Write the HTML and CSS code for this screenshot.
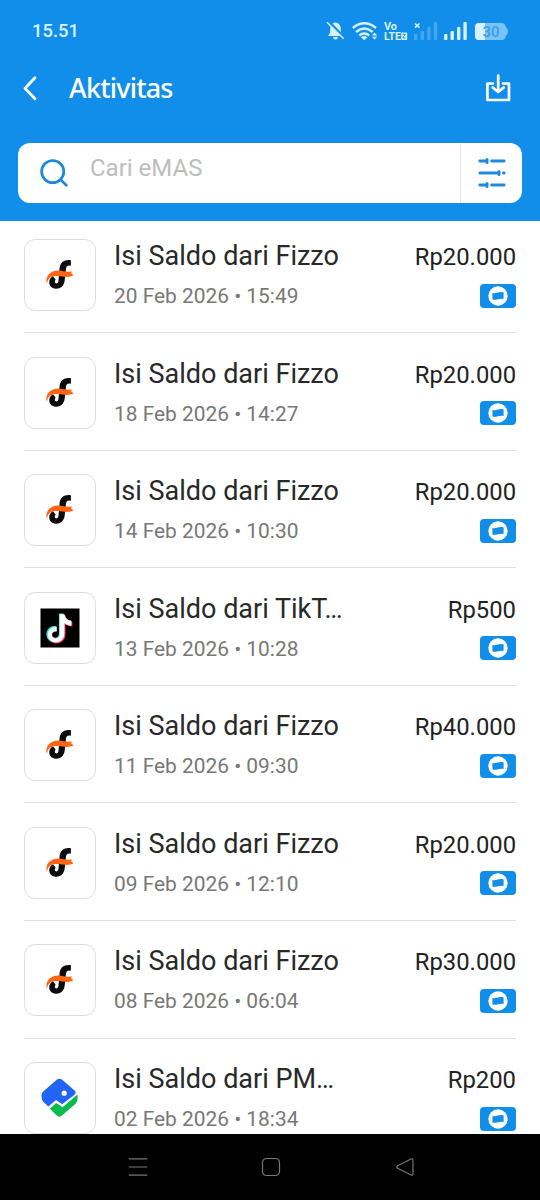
FILE: index.html
```html
<!DOCTYPE html>
<html lang="id">
<head>
<meta charset="utf-8">
<title>Aktivitas</title>
<link rel="stylesheet" href="styles.css">
</head>
<body>
<svg class="defs" aria-hidden="true">
  <symbol id="fizzo" viewBox="0 0 40 40">
    <path d="M30.9 5.2V10.7C28 10 26.4 10.8 26 13.4L24.7 25.5C24 31.2 20.2 34 15.6 33.7C11.8 33.4 9.2 30.8 9.2 27.2C9.2 24.6 10.8 22.2 13 21.2L15.6 24.6C14.2 26.6 14.6 28.4 16.4 28.4C17.9 28.4 18.3 27.4 18.5 25.6L19.6 13C20.2 7 24.8 4 30.9 5.2Z" fill="#0b0b0b"/>
    <path d="M7 29.3C4.6 20.8 10.5 15.6 18.3 15.5C23.5 15.5 27 17.9 31.8 16.2L31.2 18.2L33.4 20.6C28 23 23 21.6 18.2 21C12 20.3 7.4 22.6 7 29.3Z" fill="#ff6512"/>
  </symbol>
  <symbol id="tiktok" viewBox="0 0 40 40">
    <path d="M.5 .5H39.5V39.5H.5Z" fill="#000"/>
    <path d="M19 5.5H23.4C23.8 9.5 26.6 12 30.6 12.5V17.2C28 17.2 25.5 16.3 23.5 14.8V25.3C23.5 31 19.5 34.5 14.8 34.5C10 34.5 6.4 30.8 6.4 26.2C6.4 20.8 11 17.2 16.2 18V23C13.3 22.2 11.2 23.9 11.2 26.2C11.2 28.2 12.8 29.8 14.9 29.8C17.5 29.8 19 28 19 25.2Z" fill="#29e8df"/>
    <path d="M21.2 7.3H25.5C25.9 11.1 28.5 13.3 32.4 13.8V18.5C29.8 18.5 27.5 17.6 25.5 16.1V26.6C25.5 32 21.5 35.5 16.8 35.5C13.4 35.5 10.5 33.5 9.5 31L13 29L17 31.1C19.5 31.1 21.2 29.3 21.2 26.5Z" fill="#f32b55"/>
    <path d="M20 6.5H24.2C25 10.3 27.3 12.5 31.2 13.1V17.4C28.4 17.4 26.2 16.6 24.2 15.1V25.8C24.2 31 20.4 34.3 15.9 34.3C11.5 34.3 8 31 8 26.8C8 22.2 11.9 18.8 16.5 19V23.2C13.8 22.8 11.8 24.5 11.8 26.8C11.8 28.9 13.5 30.6 15.7 30.6C18.4 30.6 20 28.7 20 26Z" fill="#fff" stroke="#fff" stroke-width=".5"/>
  </symbol>
  <symbol id="pm" viewBox="0 0 40 40">
    <path d="M17 1.5Q19.4 -.2 21.9 1.5L34.6 12.4Q36.6 14.4 34.8 16.4L22.2 26.2L16 22L8.4 28.6L3.4 24Q1.4 22 1.5 17.5Q1.6 15 3.2 13.4Z" fill="#2264f5"/>
    <path d="M9.8 30.8L16.2 25L22.6 29.2L37.4 16.4C38 21.5 37.4 23.8 35 26.2L21.7 37.8Q19.2 39.8 16.7 37.6Z" fill="#0abb50"/>
    <circle cx="24.2" cy="15.2" r="2.6" fill="#fff"/>
  </symbol>
  <symbol id="wallet" viewBox="0 0 20 20">
    <circle cx="10" cy="10" r="9.7" fill="#fff"/>
    <path d="M4.4 7C8.2 8.2 11.6 4.9 15.6 6.6V13C11.6 11.6 8.2 14.8 4.4 13.4Z" fill="#118eea"/>
  </symbol>
</svg>
<div class="screen">
  <header class="header">
    <div class="status">
      <span class="clock">15.51</span>
      <svg class="status-icons" viewBox="324 18 188 26" fill="#d6f2ff">
        <path d="M335.3 22.5C331.8 22.5 330.3 25.5 330.3 29C330.3 32.5 329.8 34.2 327.6 36H343.4C341.2 34.2 340.8 32.5 340.8 29C340.8 25.5 338.8 22.5 335.3 22.5ZM333 37H338Q337.8 39.6 335.5 39.6Q333.2 39.6 333 37Z"/>
        <path d="M328 21L344.7 38.3" stroke="#118eea" stroke-width="3"/>
        <path d="M327 22.3L343.7 38.7" stroke="#d6f2ff" stroke-width="1.5"/>
        <g fill="none" stroke="#d6f2ff" stroke-width="2.4"><path d="M352.8 28Q364.3 18.6 376 28M356 32Q364.3 25.2 372.7 32M359.3 35.5Q364.3 31.7 369.3 35.5"/></g>
        <path d="M361 37.2Q364.2 34.8 367.4 37.2L364.2 40.2ZM374.6 32.5L377.2 35.5H372ZM374.6 39.8L377.2 36.8H372Z"/>
        <text class="volte"><tspan x="384" y="29.6" textLength="13" lengthAdjust="spacingAndGlyphs">Vo</tspan><tspan x="384" y="39.8" textLength="17" lengthAdjust="spacingAndGlyphs">LTE</tspan></text>
        <rect x="401.2" y="32.6" width="6" height="7.3" rx="1"/>
        <path d="M402.6 34.3H405.4L402.8 38H405.6" fill="none" stroke="#118eea" stroke-width=".9"/>
        <path d="M415 23.5L419.4 27.7M419.4 23.5L415 27.7" stroke="#d6f2ff" stroke-width="1.6"/>
        <g opacity=".25"><rect x="414" y="34" width="3.4" height="6" rx="1"/><rect x="420.6" y="31" width="3.4" height="9" rx="1"/><rect x="427.2" y="27" width="3.4" height="13" rx="1"/><rect x="433.8" y="22" width="3.4" height="18" rx="1"/></g>
        <rect x="444" y="34" width="3.4" height="6" rx="1"/><rect x="450.5" y="31" width="3.4" height="9" rx="1"/><rect x="457" y="27" width="3.4" height="13" rx="1"/><rect x="463.4" y="22" width="3.4" height="18" rx="1"/>
        <path d="M479 23H502Q505 23 505.8 27Q508 29 508 31.5Q508 34 505.8 36Q505 40 502 40H479Q475 40 475 36V27Q475 23 479 23Z" fill="#78c4f5"/>
        <path d="M485 23H479Q475 23 475 27V36Q475 40 479 40H485Z"/>
        <text class="battery" x="482.5" y="37.2" textLength="17">30</text>
      </svg>
    </div>
    <div class="bar">
      <svg class="back" viewBox="0 0 16 28"><path d="M13 3.8L3 14.3L13 24.8" fill="none" stroke="#fff" stroke-width="2.8" stroke-linecap="round" stroke-linejoin="round"/></svg>
      <h1>Aktivitas</h1>
      <svg class="download" viewBox="0 0 26 30" fill="none" stroke="#fff" stroke-width="2.7" stroke-linejoin="round" stroke-linecap="round"><path d="M8 10.5H2.4V27H24V10.5H18M13.2 2.5V18.5M7.7 14.5L13.2 19L18.7 14.5"/></svg>
    </div>
    <div class="search">
      <svg class="lens" viewBox="0 0 30 30" fill="none" stroke="#1c87dc" stroke-width="2.7" stroke-linecap="round"><circle cx="14.7" cy="13.6" r="11.1"/><path d="M22.7 21.8L28.3 27.2"/></svg>
      <span class="placeholder">Cari eMAS</span>
      <div class="filter"><svg viewBox="0 0 28 32" fill="none" stroke="#2189dc" stroke-width="2.8" stroke-linecap="round"><path d="M1.8 4H8M13.6 4H26.2M1.8 16H20M25.4 16H26.2M1.8 28H8M13.6 28H26.2"/><path d="M9 2.5V5.5M21 14.5V17.5M9 26.5V29.5" stroke-width="3"/></svg></div>
    </div>
  </header>
  <main class="list">
    <article class="row"><div class="thumb"><svg><use href="#fizzo"/></svg></div><div class="info"><h2>Isi Saldo dari Fizzo</h2><p>20 Feb 2026 • 15:49</p></div><div class="side"><strong>Rp20.000</strong><span class="badge"><svg><use href="#wallet"/></svg></span></div></article>
    <article class="row"><div class="thumb"><svg><use href="#fizzo"/></svg></div><div class="info"><h2>Isi Saldo dari Fizzo</h2><p>18 Feb 2026 • 14:27</p></div><div class="side"><strong>Rp20.000</strong><span class="badge"><svg><use href="#wallet"/></svg></span></div></article>
    <article class="row"><div class="thumb"><svg><use href="#fizzo"/></svg></div><div class="info"><h2>Isi Saldo dari Fizzo</h2><p>14 Feb 2026 • 10:30</p></div><div class="side"><strong>Rp20.000</strong><span class="badge"><svg><use href="#wallet"/></svg></span></div></article>
    <article class="row"><div class="thumb"><svg><use href="#tiktok"/></svg></div><div class="info"><h2>Isi Saldo dari TikT…</h2><p>13 Feb 2026 • 10:28</p></div><div class="side"><strong>Rp500</strong><span class="badge"><svg><use href="#wallet"/></svg></span></div></article>
    <article class="row"><div class="thumb"><svg><use href="#fizzo"/></svg></div><div class="info"><h2>Isi Saldo dari Fizzo</h2><p>11 Feb 2026 • 09:30</p></div><div class="side"><strong>Rp40.000</strong><span class="badge"><svg><use href="#wallet"/></svg></span></div></article>
    <article class="row"><div class="thumb"><svg><use href="#fizzo"/></svg></div><div class="info"><h2>Isi Saldo dari Fizzo</h2><p>09 Feb 2026 • 12:10</p></div><div class="side"><strong>Rp20.000</strong><span class="badge"><svg><use href="#wallet"/></svg></span></div></article>
    <article class="row"><div class="thumb"><svg><use href="#fizzo"/></svg></div><div class="info"><h2>Isi Saldo dari Fizzo</h2><p>08 Feb 2026 • 06:04</p></div><div class="side"><strong>Rp30.000</strong><span class="badge"><svg><use href="#wallet"/></svg></span></div></article>
    <article class="row"><div class="thumb"><svg><use href="#pm"/></svg></div><div class="info"><h2>Isi Saldo dari PM…</h2><p>02 Feb 2026 • 18:34</p></div><div class="side"><strong>Rp200</strong><span class="badge"><svg><use href="#wallet"/></svg></span></div></article>
  </main>
  <nav class="nav">
    <svg viewBox="0 0 20 20"><path d="M.8 1.9H19.2M.8 10H19.2M.8 18.1H19.2"/></svg>
    <svg viewBox="0 0 20 20"><rect x="1.5" y="1.5" width="17" height="17" rx="4"/></svg>
    <svg viewBox="0 0 20 20"><path d="M2.6 8.8L16 2Q18 1.3 18 3.2V16.8Q18 18.7 16 18L2.6 11.2Q.8 10 2.6 8.8Z"/></svg>
  </nav>
</div>
</body>
</html>
```
FILE: styles.css
```css
* { box-sizing: border-box; }
body { margin: 0; background: #fff; font-family: Roboto, sans-serif; }
svg { display: block; flex: none; }
.defs { display: none; }
.screen { display: flex; flex-direction: column; width: 540px; height: 1200px; overflow: hidden; }

.header { flex: none; height: 221.4px; background: #118eea; }
.status { display: flex; justify-content: space-between; align-items: center; height: 62px; padding: 0 28px 0 32px; }
.clock { color: #d9f3ff; font-size: 18.4px; font-weight: 500; line-height: 24px; }
.status-icons { width: 188px; height: 26px; }
.volte { font: 700 10.2px Roboto, sans-serif; }
.battery { font: 500 15px Roboto, sans-serif; fill: #3c9ee5; }
.bar { display: flex; align-items: center; height: 52px; padding: 0 29px 0 22px; }
.back { width: 16px; height: 28px; }
.bar h1 { flex: 1; margin: 0 0 0 31px; color: #fff; font: 500 27px/36px "Noto Sans", sans-serif; letter-spacing: -.8px; }
.download { width: 26px; height: 30px; }
.search { display: flex; height: 60px; margin: 29.4px 18px 0; background: #fff; border-radius: 12px; }
.lens { width: 30px; height: 30px; margin: 15px 0 0 20px; }
.placeholder { flex: 1; margin: 10px 0 0 22px; color: #bdbdbd; font-size: 24px; line-height: 30px; }
.filter { display: flex; align-items: center; width: 62px; padding-left: 17px; border-left: 1px solid #dde5ee; }
.filter svg { width: 28px; height: 32px; }

.list { flex: 1; min-height: 0; display: flex; flex-direction: column; gap: 23.4px; padding: 17.55px 24px 0; overflow: hidden; }
.row { flex: none; display: flex; height: 94.2px; border-bottom: 1.5px solid #e1e1e1; }
.thumb { display: grid; place-items: center; flex: none; width: 72px; height: 72px; border: 1.5px solid #dedede; border-radius: 11px; }
.thumb svg { width: 40px; height: 40px; }
.info { flex: 1; margin-left: 18px; white-space: nowrap; }
.info h2 { margin: 0; color: #282828; font-size: 27px; font-weight: 400; line-height: 34px; }
.info p { margin: 10px 0 0; color: #777; font-size: 20.9px; line-height: 26px; }
.side { display: flex; flex-direction: column; align-items: flex-end; }
.side strong { color: #222; font-size: 23.8px; font-weight: 400; line-height: 36px; }
.badge { display: grid; place-items: center; width: 36px; height: 24px; margin-top: 8.6px; background: #118eea; border-radius: 4px; }
.badge svg { width: 20px; height: 20px; }

.nav { display: flex; flex: none; align-items: center; justify-content: space-between; height: 66px; padding: 0 125.5px 0 127.5px; background: #000; }
.nav svg { width: 20px; height: 20px; fill: none; stroke: #777; stroke-width: 1.2; }
```
